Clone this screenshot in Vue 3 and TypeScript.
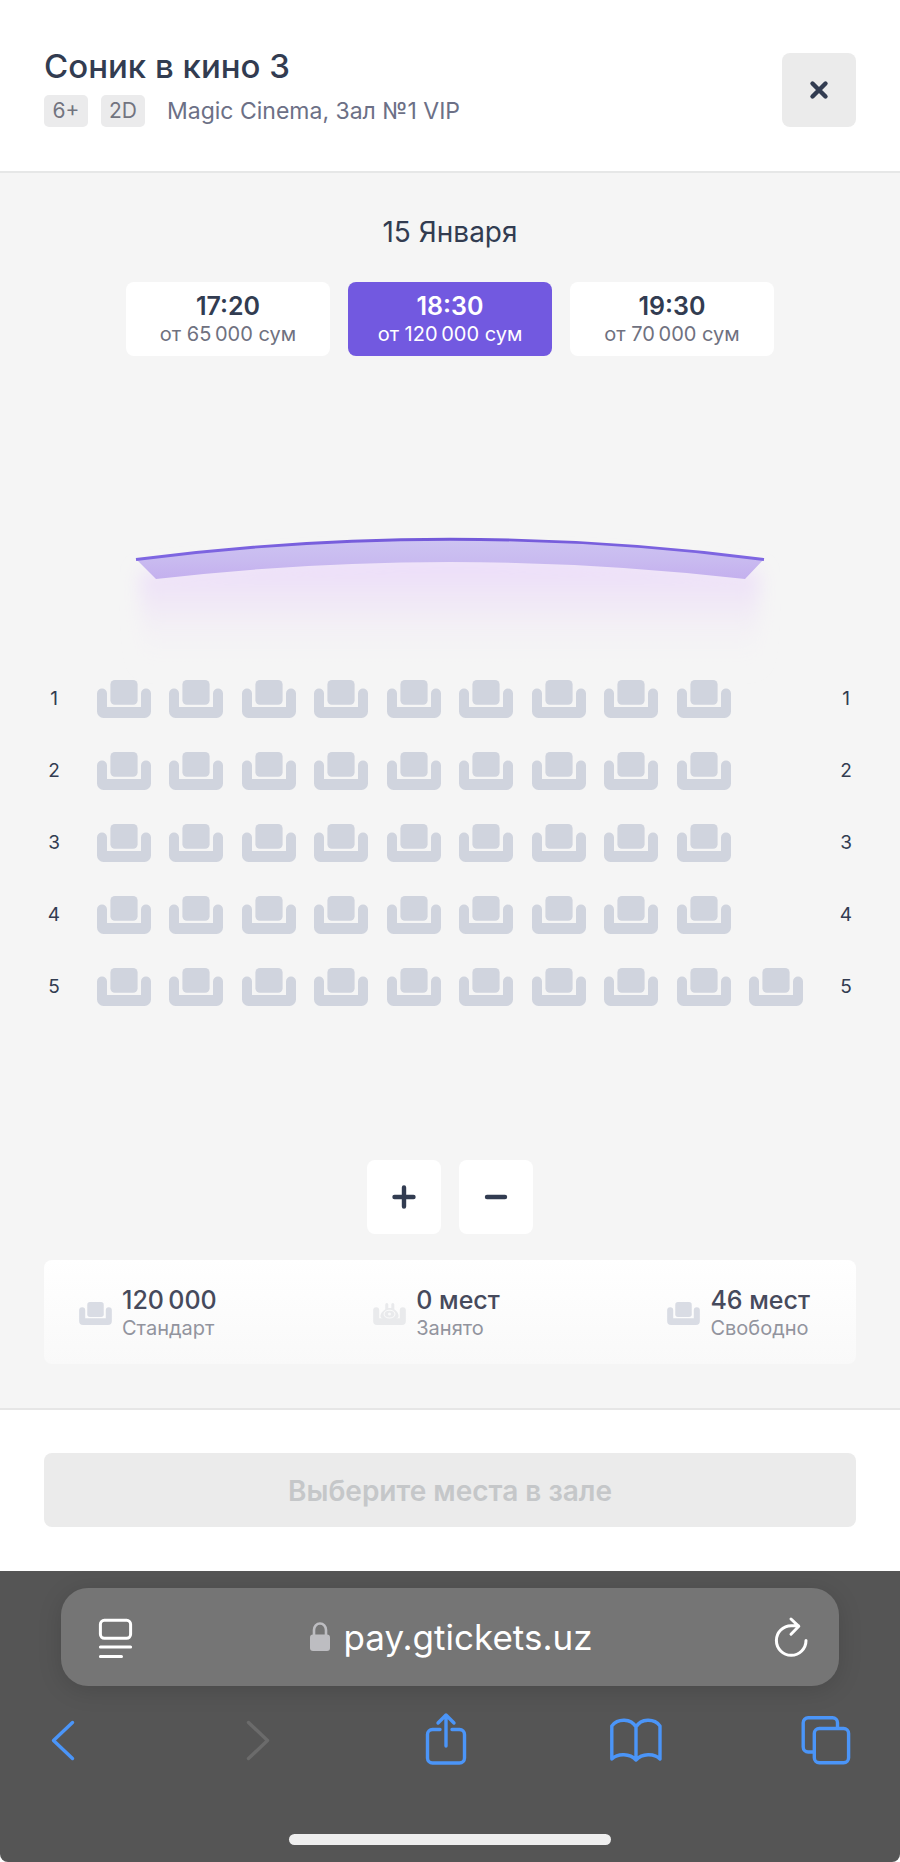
<script setup lang="ts">
import { ref } from 'vue'

interface Session {
  time: string
  price: string
}

interface LegendItem {
  title: string
  caption: string
  taken: boolean
}

const sessions: Session[] = [
  { time: '17:20', price: 'от 65\u2009000 сум' },
  { time: '18:30', price: 'от 120\u2009000 сум' },
  { time: '19:30', price: 'от 70\u2009000 сум' },
]
const activeSession = ref(1)

const columns = 10
const rows = [9, 9, 9, 9, 10]

const legend: LegendItem[] = [
  { title: '120\u2009000', caption: 'Стандарт', taken: false },
  { title: '0 мест', caption: 'Занято', taken: true },
  { title: '46 мест', caption: 'Свободно', taken: false },
]
</script>

<template>
  <div class="page">
    <header class="header">
      <div class="movie">
        <h1 class="title">Соник в кино 3</h1>
        <div class="meta">
          <span class="chip">6+</span>
          <span class="chip">2D</span>
          <span class="place">Magic Cinema, Зал №1 VIP</span>
        </div>
      </div>
      <button class="square close" type="button" aria-label="Закрыть">
        <svg width="24" height="24" viewBox="0 0 24 24" fill="none" stroke="currentColor" stroke-width="4.4" stroke-linecap="round">
          <path d="M5.500 5.500 18.500 18.500M18.500 5.500 5.500 18.500" />
        </svg>
      </button>
    </header>

    <main class="hall">
      <h2 class="date">15 Января</h2>
      <div class="sessions">
        <button
          v-for="(session, i) in sessions"
          :key="session.time"
          type="button"
          class="session"
          :class="{ active: i === activeSession }"
          :aria-pressed="i === activeSession"
          @click="activeSession = i"
        >
          <span class="time">{{ session.time }}</span>
          <span class="price">{{ session.price }}</span>
        </button>
      </div>

      <svg class="screen" viewBox="0 0 900 150" aria-hidden="true">
        <defs>
          <linearGradient id="screenFill" x1="0" y1="0" x2="0" y2="1">
            <stop offset="0" stop-color="#cdc4f2" />
            <stop offset="0.5" stop-color="#c9bbf0" />
            <stop offset="1" stop-color="#c4b0ee" />
          </linearGradient>
          <linearGradient id="glowFill" gradientUnits="userSpaceOnUse" x1="0" y1="40" x2="0" y2="150">
            <stop offset="0" stop-color="#ecdcfa" />
            <stop offset="0.4" stop-color="#f0e8f6" stop-opacity="0.9" />
            <stop offset="1" stop-color="#f5f5f5" stop-opacity="0" />
          </linearGradient>
          <linearGradient id="edgeStroke" x1="0" y1="0" x2="1" y2="0">
            <stop offset="0" stop-color="#7f67e2" />
            <stop offset="0.5" stop-color="#7359d9" />
            <stop offset="1" stop-color="#7f67e2" />
          </linearGradient>
          <filter id="soft" x="-10%" y="-30%" width="120%" height="160%">
            <feGaussianBlur stdDeviation="9" />
          </filter>
        </defs>
        <path d="M140 52 Q450 18 760 52 L758 150 H142Z" fill="url(#glowFill)" filter="url(#soft)" />
        <path d="M136 39 Q450 -1 764 39 L745 59 Q450 25 156 59Z" fill="url(#screenFill)" />
        <path d="M136 39.500 Q450 -1 764 39.500" fill="none" stroke="url(#edgeStroke)" stroke-width="2.800" />
      </svg>

      <div class="seats">
        <div v-for="(count, r) in rows" :key="r" class="row">
          <span class="row-number">{{ r + 1 }}</span>
          <div class="row-seats">
            <template v-for="n in columns" :key="n">
              <button v-if="n <= count" type="button" class="seat" :aria-label="`Ряд ${r + 1}, место ${n}`">
                <svg width="54" height="38" viewBox="0 0 54 38" fill="currentColor">
                  <rect x="13.400" y="0" width="27.200" height="24.800" rx="4.500" />
                  <path d="M0 13.500a5 5 0 0 1 10 0V27H44V13.500a5 5 0 0 1 10 0V31.500a6.500 6.500 0 0 1-6.500 6.500H6.500A6.500 6.500 0 0 1 0 31.500Z" />
                </svg>
              </button>
              <span v-else class="seat"></span>
            </template>
          </div>
          <span class="row-number">{{ r + 1 }}</span>
        </div>
      </div>

      <div class="zoom">
        <button class="square" type="button" aria-label="Увеличить">
          <svg width="24" height="24" viewBox="0 0 24 24" fill="none" stroke="currentColor" stroke-width="4.400" stroke-linecap="round">
            <path d="M12 2.500V21.500M2.500 12H21.500" />
          </svg>
        </button>
        <button class="square" type="button" aria-label="Уменьшить">
          <svg width="24" height="24" viewBox="0 0 24 24" fill="none" stroke="currentColor" stroke-width="4.400" stroke-linecap="round">
            <path d="M3 12H21" />
          </svg>
        </button>
      </div>

      <div class="legend">
        <div v-for="item in legend" :key="item.caption" class="legend-item">
          <svg v-if="!item.taken" class="legend-icon" width="33" height="23" viewBox="0 0 54 38" fill="#d9dce4" aria-hidden="true">
            <rect x="13.400" y="0" width="27.200" height="24.800" rx="4.500" />
            <path d="M0 13.500a5 5 0 0 1 10 0V27H44V13.500a5 5 0 0 1 10 0V31.500a6.500 6.500 0 0 1-6.500 6.500H6.500A6.500 6.500 0 0 1 0 31.500Z" />
          </svg>
          <svg v-else class="legend-icon" width="33" height="23" viewBox="0 0 54 38" fill="#e9eaec" aria-hidden="true">
            <path d="M0 13.500a5 5 0 0 1 10 0V27H44V13.500a5 5 0 0 1 10 0V31.500a6.500 6.500 0 0 1-6.500 6.500H6.500A6.500 6.500 0 0 1 0 31.500Z" />
            <path d="M20 12V4a2.500 2.500 0 0 1 5 0v6h5V4a2.500 2.500 0 0 1 5 0v8c4 3 7 7 7 11 0 4-7 7-14.500 7S12 27 12 23c0-4 4-8 8-11Z" />
            <ellipse cx="27" cy="20" rx="9" ry="6.500" fill="none" stroke="#fafafa" stroke-width="1.800" />
            <circle cx="27" cy="20" r="2.500" fill="#fafafa" />
          </svg>
          <div>
            <div class="legend-title">{{ item.title }}</div>
            <div class="legend-caption">{{ item.caption }}</div>
          </div>
        </div>
      </div>
    </main>

    <footer class="footer">
      <button class="submit" type="button" disabled>Выберите места в зале</button>
    </footer>

    <section class="browser">
      <div class="address-bar">
        <button class="bare" type="button" aria-label="Меню страницы">
          <svg width="40" height="44" viewBox="0 0 40 44" fill="none" stroke="#fff" stroke-width="3" stroke-linecap="round">
            <rect x="5.400" y="5.300" width="30.200" height="18" rx="4" />
            <path d="M5.400 32H35.600M5.400 41.500H26.500" />
          </svg>
        </button>
        <button class="bare address" type="button">
          <svg width="20" height="30" viewBox="0 0 20 30" aria-hidden="true">
            <path d="M4 14V8a6 6.500 0 0 1 12 0v6" fill="none" stroke="#bdbdc1" stroke-width="2.600" />
            <rect x="0" y="12.500" width="20" height="16.500" rx="3" fill="#bdbdc1" />
          </svg>
          <span>pay.gtickets.uz</span>
        </button>
        <button class="bare reload" type="button" aria-label="Обновить">
          <svg width="34" height="44" viewBox="0 0 34 44" fill="none" stroke="#fff" stroke-width="3" stroke-linecap="round" stroke-linejoin="round">
            <path d="M32 25.500A14.800 14.800 0 1 1 17.200 10.700H24.500M17 4 24.800 11.300 17 19.200" />
          </svg>
        </button>
      </div>

      <nav class="toolbar" aria-label="Панель браузера">
        <button class="bare" type="button" aria-label="Назад">
          <svg class="tool" viewBox="0 0 52 52"><path d="M36.500 9.500 17.500 27.500 36.500 45.500" /></svg>
        </button>
        <button class="bare muted" type="button" aria-label="Вперёд" disabled>
          <svg class="tool" viewBox="0 0 52 52"><path d="M21.500 9.500 40.500 27.500 21.500 45.500" /></svg>
        </button>
        <button class="bare" type="button" aria-label="Поделиться">
          <svg class="tool" viewBox="0 0 52 52">
            <path d="M22 16.500H14.500a5 5 0 0 0-5 5V45a5 5 0 0 0 5 5H41.500a5 5 0 0 0 5-5V21.500a5 5 0 0 0-5-5H34" />
            <path d="M28 33V2M20 10 28 2 36 10" />
          </svg>
        </button>
        <button class="bare" type="button" aria-label="Закладки">
          <svg class="tool" viewBox="0 0 52 52">
            <path d="M27 14C22 5.500 9 5 2.800 13V46C9 40 21 40.500 27 47 33 40.500 45 40 51 46V13C45 5 32 5.500 27 14V46" />
          </svg>
        </button>
        <button class="bare" type="button" aria-label="Вкладки">
          <svg class="tool" viewBox="0 0 52 52">
            <rect x="14.300" y="15.500" width="34.300" height="34.300" rx="5" />
            <path d="M37.500 15V9.800a5 5 0 0 0-5-5H8.200a5 5 0 0 0-5 5V34a5 5 0 0 0 5 5H14" />
          </svg>
        </button>
      </nav>
      <div class="home-indicator"></div>
    </section>
  </div>
</template>

<style>
body {
  margin: 0;
  background: #fff;
}
</style>

<style scoped>
.page {
  font-family: Inter, 'Liberation Sans', sans-serif;
  color: #323c51;
}

button {
  margin: 0;
  padding: 0;
  border: 0;
  background: none;
  font: inherit;
  color: inherit;
}

svg {
  display: block;
}

.header {
  display: flex;
  align-items: flex-end;
  justify-content: space-between;
  padding: 46px 44px 44px;
  border-bottom: 2px solid #e6e7e7;
  background: #fff;
}

.title {
  margin: 0 0 9px;
  font-size: 33px;
  line-height: 40px;
  font-weight: 500;
}

.meta {
  display: flex;
  align-items: center;
  gap: 13px;
  line-height: 32px;
  color: #6c7086;
}

.chip {
  width: 44px;
  border-radius: 5px;
  background: #ebebec;
  font-size: 21px;
  text-align: center;
  color: #72747f;
}

.place {
  margin-left: 9px;
  font-size: 23px;
}

.square {
  display: flex;
  align-items: center;
  justify-content: center;
  width: 74px;
  height: 74px;
  border-radius: 8px;
  background: #fff;
}

.close {
  background: #ebebeb;
}

.hall {
  padding: 41px 0 44px;
  background: #f5f5f5;
}

.date {
  margin: 0 0 32px;
  font-size: 28px;
  line-height: 36px;
  font-weight: 400;
  text-align: center;
}

.sessions {
  display: flex;
  justify-content: center;
  gap: 18px;
}

.session {
  display: flex;
  flex-direction: column;
  align-items: center;
  justify-content: center;
  width: 204px;
  height: 74px;
  border-radius: 8px;
  background: #fff;
}

.time {
  font-size: 25px;
  line-height: 30px;
  font-weight: 600;
}

.price {
  font-size: 20px;
  line-height: 26px;
  color: #6f7180;
}

.session.active,
.session.active .price {
  color: #fff;
}

.session.active {
  background: #7259e0;
}

.screen {
  width: 100%;
  height: auto;
  margin-top: 164px;
  overflow: visible;
}

.seats {
  display: grid;
  gap: 34px;
  margin: 10px 44px 0;
}

.row {
  display: flex;
  align-items: center;
}

.row-number {
  width: 20px;
  font-size: 19px;
  line-height: 38px;
  text-align: center;
}

.row-seats {
  display: flex;
  flex: 1;
  justify-content: space-between;
  margin: 0 33px;
}

.seat {
  width: 54px;
  height: 38px;
  color: #d0d4de;
}

.zoom {
  display: flex;
  justify-content: center;
  gap: 18px;
  margin-top: 154px;
}

.legend {
  display: grid;
  grid-template-columns: 1fr 1fr auto;
  margin: 26px 44px 0;
  padding: 25px 46px 23px 35px;
  border-radius: 8px;
  background: linear-gradient(#fff, #f9f9f9);
}

.legend-item {
  display: flex;
  align-items: center;
  gap: 10px;
}

.legend-title {
  font-size: 25px;
  line-height: 30px;
  font-weight: 500;
  color: #464a5c;
}

.legend-caption {
  font-size: 20px;
  line-height: 26px;
  color: #92949e;
}

.footer {
  padding: 43px 44px 44px;
  border-top: 2px solid #e6e6e6;
  background: #fff;
}

.submit {
  width: 100%;
  height: 74px;
  padding-top: 2px;
  border-radius: 8px;
  background: #ebebeb;
  font-size: 28px;
  font-weight: 600;
  color: #c5c7c9;
}

.browser {
  padding: 17px 0;
  border-radius: 0 0 8px 8px;
  background: #555;
}

.address-bar {
  display: grid;
  grid-template-columns: 1fr auto 1fr;
  align-items: center;
  height: 98px;
  margin: 0 61px;
  padding: 0 31px 0 34px;
  border-radius: 27px;
  background: #757575;
  box-shadow: 0 4px 24px rgba(0, 0, 0, 0.14);
  color: #fff;
}

.bare {
  display: block;
}

.address {
  display: flex;
  align-items: center;
  gap: 13px;
  font-size: 35px;
  line-height: 44px;
}

.reload {
  justify-self: end;
}

.toolbar {
  display: flex;
  justify-content: space-between;
  margin-top: 27px;
  padding: 0 48px 0 36px;
  color: #4b95f8;
}

.muted {
  color: #6b6b6b;
}

.tool {
  width: 52px;
  height: 52px;
  overflow: visible;
  fill: none;
  stroke: currentColor;
  stroke-width: 3.4px;
  stroke-linecap: round;
  stroke-linejoin: round;
}

.home-indicator {
  width: 322px;
  height: 11px;
  margin: 69px auto 0;
  border-radius: 6px;
  background: #eee;
}
</style>
